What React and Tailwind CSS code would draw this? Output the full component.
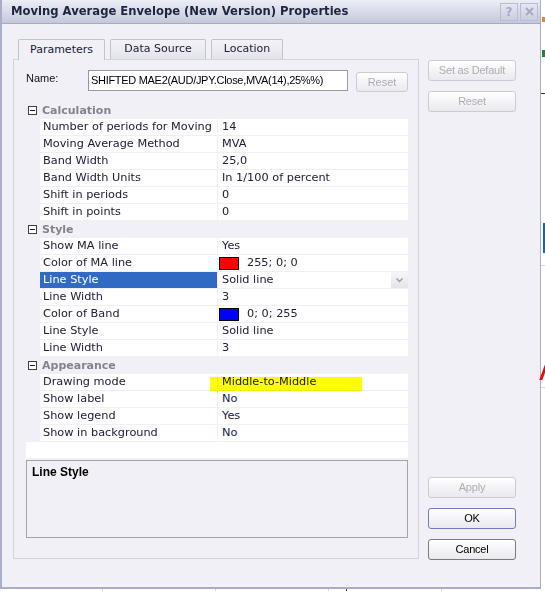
import React from "react";

const sections = [
  {
    title: "Calculation",
    rows: [
      { name: "Number of periods for Moving", value: "14" },
      { name: "Moving Average Method", value: "MVA" },
      { name: "Band Width", value: "25,0" },
      { name: "Band Width Units", value: "In 1/100 of percent" },
      { name: "Shift in periods", value: "0" },
      { name: "Shift in points", value: "0" },
    ],
  },
  {
    title: "Style",
    rows: [
      { name: "Show MA line", value: "Yes" },
      { name: "Color of MA line", value: "255; 0; 0", swatch: "bg-[#ff0000]" },
      { name: "Line Style", value: "Solid line", selected: true },
      { name: "Line Width", value: "3" },
      { name: "Color of Band", value: "0; 0; 255", swatch: "bg-[#0000ff]" },
      { name: "Line Style", value: "Solid line" },
      { name: "Line Width", value: "3" },
    ],
  },
  {
    title: "Appearance",
    rows: [
      { name: "Drawing mode", value: "Middle-to-Middle", marked: true },
      { name: "Show label", value: "No" },
      { name: "Show legend", value: "Yes" },
      { name: "Show in background", value: "No" },
    ],
  },
];

function Button({ children, disabled, kind }) {
  const border =
    kind === "ok"
      ? "border-[#7479bd]"
      : kind === "cancel"
      ? "border-[#7a7a82]"
      : "border-[#cbcbd4]";
  return (
    <div
      className={`h-[21px] w-[88px] flex items-center justify-center rounded-[3px] border ${border} bg-linear-to-b from-white to-[#e9e9ef] font-['Liberation_Sans',sans-serif] text-[11px] tracking-[-0.2px] ${
        disabled ? "text-[#acacb8]" : "text-black"
      }`}
    >
      {children}
    </div>
  );
}

function Category({ title }) {
  return (
    <div className="h-[17px] flex items-center">
      <div className="ml-[2px] w-[9px] h-[9px] border border-[#404040] bg-white flex items-center justify-center">
        <div className="w-[5px] h-px bg-[#202020]" />
      </div>
      <span className="ml-[5px] font-bold text-[11px] text-[#83838c] leading-[17px]">{title}</span>
    </div>
  );
}

function Row({ row }) {
  return (
    <div className="relative h-[17px] flex pl-[14px]">
      <div
        className={`w-[177px] h-[16px] pl-[3px] leading-[16px] whitespace-nowrap overflow-hidden ${
          row.selected ? "bg-[#316ac5] text-white" : "bg-white"
        }`}
      >
        {row.name}
      </div>
      <div className="ml-px flex-1 h-[16px] bg-white flex items-center pl-[1px]">
        {row.swatch && (
          <div className={`w-[20px] h-[13px] border border-black ${row.swatch} mr-[8px]`} />
        )}
        <span className={`leading-[16px] whitespace-nowrap ${row.swatch ? "" : "pl-[3px]"}`}>
          {row.value}
        </span>
        {row.selected && (
          <div className="ml-auto w-[17px] h-[16px] bg-linear-to-b from-[#f7f7f9] to-[#e4e4ea] flex items-center justify-center">
            <svg width="7" height="5" viewBox="0 0 7 5">
              <path d="M0.5 0.5 L3.5 3.5 L6.5 0.5" fill="none" stroke="#9a9aa8" strokeWidth="1.4" />
            </svg>
          </div>
        )}
      </div>
      {row.marked && (
        <div className="absolute left-[184px] top-[3px] w-[152px] h-[16px] bg-[#ffff00] mix-blend-multiply" />
      )}
    </div>
  );
}

export default function App() {
  return (
    <div className="relative w-[545px] h-[591px] bg-white overflow-hidden">
      <div className="w-[541px] h-[589px] flex flex-col bg-[#f0f0f6] border-l-2 border-r border-b-2 border-[#a9adc8]">
        <div className="h-[24px] shrink-0 flex items-center bg-linear-to-b from-[#eceef5] to-[#c5c8dc] border-b border-[#a6aac6] pl-[9px] pr-[2px]">
          <span className="font-['DejaVu_Sans',sans-serif] font-bold text-[11.6px] text-[#1c2440]">
            Moving Average Envelope (New Version) Properties
          </span>
          <div className="ml-auto flex gap-[2px]">
            <div className="w-[18px] h-[18px] border border-[#b9bcd3] flex items-center justify-center font-['DejaVu_Sans',sans-serif] font-bold text-[12px] text-[#a5a9c4]">
              ?
            </div>
            <div className="w-[18px] h-[18px] border border-[#b9bcd3] flex items-center justify-center">
              <svg width="9" height="9" viewBox="0 0 9 9">
                <path d="M1 1 L8 8 M8 1 L1 8" stroke="#a5a9c4" strokeWidth="2" />
              </svg>
            </div>
          </div>
        </div>

        <div className="flex-1 flex pl-[11px] pt-[15px] pb-[27px]">
          <div className="w-[406px] flex flex-col font-['DejaVu_Sans',sans-serif] text-[11px] text-[#20203a]">
            <div className="h-[20px] flex items-end pl-[5px] gap-[5px]">
              <div className="relative z-10 -mb-px h-[21px] w-[87px] flex items-center justify-center bg-[#f0f0f6] border border-b-0 border-[#c3c3ce] rounded-t-[2px]">
                Parameters
              </div>
              <div className="h-[20px] w-[96px] flex items-center justify-center bg-linear-to-b from-[#f3f3f7] to-[#e3e3eb] border border-b-0 border-[#c3c3ce] rounded-t-[2px]">
                Data Source
              </div>
              <div className="h-[20px] w-[72px] flex items-center justify-center bg-linear-to-b from-[#f3f3f7] to-[#e3e3eb] border border-b-0 border-[#c3c3ce] rounded-t-[2px]">
                Location
              </div>
            </div>
            <div className="h-[500px] border border-[#d3d3dc] pl-[12px] pt-[10px]">
              <div className="h-[22px] flex items-start font-['Liberation_Sans',sans-serif]">
                <span className="w-[62px] pt-0 text-[11px] text-[#111]">Name:</span>
                <div className="w-[260px] h-[21px] border border-[#9a9aa4] bg-white flex items-center pl-[2px] text-[11px] tracking-[-0.3px] text-black whitespace-nowrap">
                  SHIFTED MAE2(AUD/JPY.Close,MVA(14),25%%)
                </div>
                <div className="ml-[8px] mt-[2px] w-[52px] h-[20px] flex items-center justify-center rounded-[3px] border border-[#cbcbd4] bg-linear-to-b from-white to-[#e9e9ef] text-[11px] text-[#acacb8]">
                  Reset
                </div>
              </div>

              <div className="mt-[10px] w-[382px] h-[356px] flex flex-col text-[11.3px]">
                {sections.map((s) => (
                  <React.Fragment key={s.title}>
                    <Category title={s.title} />
                    {s.rows.map((r, i) => (
                      <Row key={i} row={r} />
                    ))}
                  </React.Fragment>
                ))}
                <div className="flex-1 bg-white" />
              </div>

              <div className="mt-[2px] w-[382px] h-[78px] border border-[#a3a3a8] pl-[5px] pt-[2px] font-['Liberation_Sans',sans-serif] font-bold text-[12px] text-black">
                Line Style
              </div>
            </div>
          </div>

          <div className="ml-[9px] flex flex-col pt-[21px]">
            <Button disabled>Set as Default</Button>
            <div className="mt-[10px]">
              <Button disabled>Reset</Button>
            </div>
            <div className="mt-auto flex flex-col gap-[10px]">
              <Button disabled>Apply</Button>
              <Button kind="ok">OK</Button>
              <Button kind="cancel">Cancel</Button>
            </div>
          </div>
        </div>
      </div>

      <div className="absolute left-[542px] top-[17px] w-[3px] h-[5px] bg-[#e08a2c]" />
      <div className="absolute left-[542px] top-[50px] w-[3px] h-[7px] bg-[#2f7d2f]" />
      <div className="absolute left-[541px] top-[93px] w-[4px] h-px bg-[#333]" />
      <div className="absolute left-[543px] top-[223px] w-[2px] h-[30px] bg-[#1565c0]" />
      <div className="absolute left-[541px] top-[265px] w-[4px] h-px bg-[#d8d8d8]" />
      <div className="absolute left-[542px] top-[365px] w-[3px] h-[15px] bg-[#ff0000] skew-x-[-20deg]" />
      <div className="absolute left-[541px] top-[387px] w-[4px] h-px bg-[#d8d8d8]" />
      <div className="absolute left-[102px] top-[589px] w-px h-[2px] bg-[#cfcfcf]" />
      <div className="absolute left-[215px] top-[589px] w-px h-[2px] bg-[#cfcfcf]" />
      <div className="absolute left-[328px] top-[589px] w-px h-[2px] bg-[#cfcfcf]" />
      <div className="absolute left-[346px] top-[589px] w-px h-[2px] bg-[#333]" />
      <div className="absolute left-[441px] top-[589px] w-px h-[2px] bg-[#cfcfcf]" />
    </div>
  );
}
